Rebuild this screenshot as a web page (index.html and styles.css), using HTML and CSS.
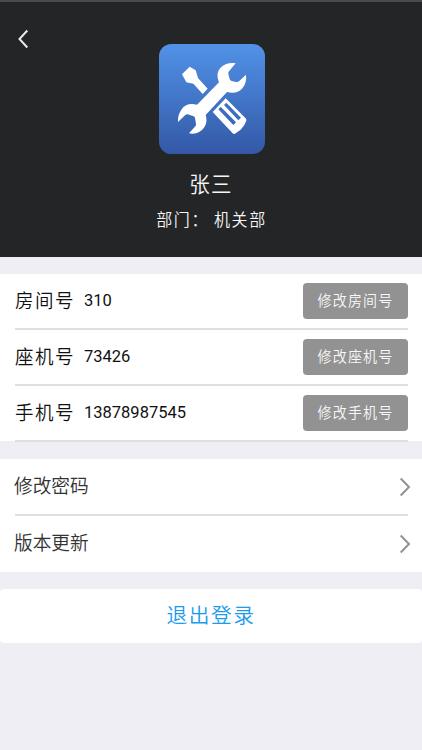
FILE: index.html
```html
<!DOCTYPE html>
<html lang="zh-CN">
<head>
<meta charset="utf-8">
<meta name="viewport" content="width=device-width, initial-scale=1">
<title>张三</title>
<link rel="stylesheet" href="styles.css">
</head>
<body>
<header class="profile">
  <svg class="back" viewBox="0 0 11 20"><path d="M9.3 1.5 1.5 10l7.8 8.5"/></svg>
  <svg class="avatar" viewBox="27 24 318 330">
    <defs><linearGradient id="blue" x1="0" y1="0" x2="0" y2="1"><stop offset="0" stop-color="#5192e7"/><stop offset="1" stop-color="#3358a6"/></linearGradient></defs>
    <rect x="27" y="24" width="318" height="330" rx="37" fill="url(#blue)"/>
    <g fill="#fff">
      <path d="M96 115 119 92 137 103 144 126 173 158 158 174 130 143 109 139Z"/>
      <path d="M257 82C241 79 225 83 214 93C201 105 200 120 207 139L141 206C118 201 103 207 94 221C86 233 83 245 84 258L106 237Q109 234 113 235L131 241Q134 242 135 246L138 263Q139 267 136 271L117 292C132 295 146 291 156 282C170 269 172 253 167 237L231 168C251 173 268 169 278 156C287 144 290 131 288 116L268 135Q264 139 259 138L245 135Q240 134 239 129L235 114Q234 110 237 106Z"/>
      <path fill-rule="evenodd" d="M227 187 188 228 248 292Q252 296 257 292L272 281 283 267 289 254Q290 250 286 246ZM212 212 205 220 250 267 258 259ZM229 200 222 207 265 253 273 245Z"/>
    </g>
  </svg>
  <h1 class="name">张三</h1>
  <p class="department">部门：<span class="unit">机关部</span></p>
</header>
<main>
  <section class="panel contacts">
    <div class="contact"><span class="label">房间号</span><span class="value">310</span><button class="edit"><span class="caption">修改房间号</span></button></div>
    <div class="contact"><span class="label">座机号</span><span class="value">73426</span><button class="edit"><span class="caption">修改座机号</span></button></div>
    <div class="contact"><span class="label">手机号</span><span class="value">13878987545</span><button class="edit"><span class="caption">修改手机号</span></button></div>
  </section>
  <nav class="panel menu">
    <a class="item"><span class="title">修改密码</span><svg class="chevron" viewBox="0 0 12 20"><path d="M1.7 1.5 10 10l-8.3 8.5"/></svg></a>
    <a class="item"><span class="title">版本更新</span><svg class="chevron" viewBox="0 0 12 20"><path d="M1.7 1.5 10 10l-8.3 8.5"/></svg></a>
  </nav>
  <button class="logout">退出登录</button>
</main>
</body>
</html>
```
FILE: styles.css
```css
* { box-sizing: border-box; }
body {
  margin: 0;
  min-height: 750px;
  background: #eeeef4;
  color: #111;
  font-family: Roboto, "Noto Sans CJK SC", sans-serif;
  font-weight: 350;
}
button { border: 0; padding: 0; font-family: inherit; font-weight: inherit; }
.profile {
  position: relative;
  display: flex;
  flex-direction: column;
  align-items: center;
  height: 257px;
  padding-top: 42px;
  border-top: 2px solid #4a4a4c;
  background: #242527;
  color: #f5f5f6;
}
.back { position: absolute; left: 18px; top: 27px; width: 11px; height: 20px; }
.back path { fill: none; stroke: #e9e9ec; stroke-width: 2; }
.avatar { width: 106px; height: 110px; margin-left: 2px; }
.name, .department, .label, .caption, .title { transform: scaleY(1.06); }
.name {
  margin: 16px 0 0;
  font-size: 20.5px;
  font-weight: inherit;
  line-height: 30px;
  letter-spacing: 1.3px;
}
.department {
  margin: 9px 0 0 1px;
  font-size: 16px;
  line-height: 24px;
  letter-spacing: 1.6px;
}
.unit { margin-left: 5px; }
.panel { background: #fff; }
.contacts { height: 167px; margin-top: 17px; padding: 0 14px 0 15px; }
.contact {
  display: flex;
  align-items: center;
  height: 56px;
  border-bottom: 2px solid #dfdfe1;
}
.label { width: 69px; padding-bottom: 2px; font-size: 18.5px; letter-spacing: 1.5px; }
.value { padding-bottom: 1px; font-size: 16.5px; font-weight: 400; }
.edit {
  width: 105px;
  height: 36px;
  margin-left: auto;
  border-radius: 4px;
  background: #929292;
  color: #f8f8f8;
  font-size: 14px;
  letter-spacing: 1.2px;
}
.caption { display: block; padding-bottom: 3px; }
.menu { height: 113px; margin-top: 18px; padding: 0 11px 0 14px; }
.item {
  position: relative;
  display: flex;
  align-items: center;
  justify-content: space-between;
  height: 57px;
  padding-bottom: 2px;
  color: #333;
  font-size: 18.7px;
}
.item:first-child::after {
  content: "";
  position: absolute;
  left: 1px;
  right: 3px;
  bottom: 0;
  height: 2px;
  background: #dfdfe1;
}
.title { padding-bottom: 4px; }
.chevron { width: 12px; height: 20px; }
.chevron path { fill: none; stroke: #929292; stroke-width: 2; }
.logout {
  display: block;
  width: 100%;
  height: 54px;
  margin-top: 17px;
  padding-bottom: 4px;
  border-radius: 4px;
  background: #fff;
  color: #1a9bee;
  font-size: 20.7px;
  letter-spacing: 1.6px;
}
```
